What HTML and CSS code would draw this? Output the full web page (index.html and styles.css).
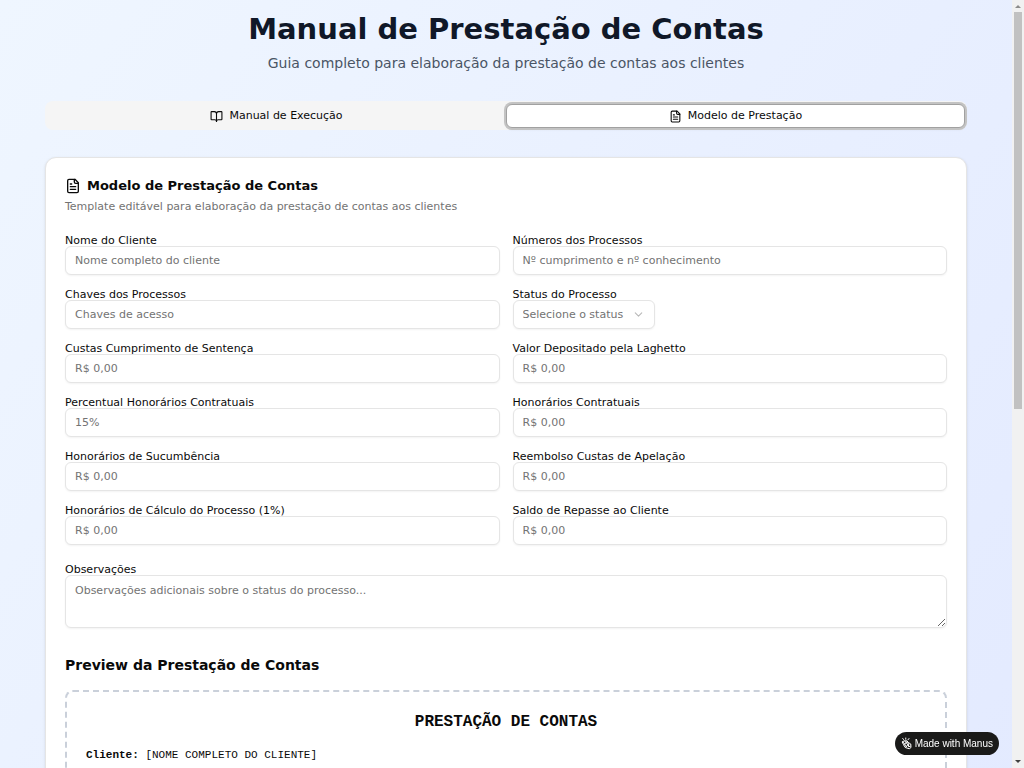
FILE: index.html
```html
<!DOCTYPE html>
<html lang="pt-BR">
<head>
<meta charset="utf-8">
<meta name="viewport" content="width=device-width, initial-scale=1">
<title>Manual de Prestação de Contas</title>
<link rel="stylesheet" href="styles.css">
</head>
<body>
<div class="shell">
  <div class="scroller">
    <div class="page">
      <main class="container">
        <header class="hero">
          <h1 class="hero-title">Manual de Prestação de Contas</h1>
          <p class="hero-subtitle">Guia completo para elaboração da prestação de contas aos clientes</p>
        </header>

        <div class="tabs" role="tablist">
          <button class="tab" type="button" role="tab" aria-selected="false">
            <svg class="icon" viewBox="0 0 24 24" aria-hidden="true"><path d="M12 7v14"/><path d="M3 18a1 1 0 0 1-1-1V4a1 1 0 0 1 1-1h5a4 4 0 0 1 4 4 4 4 0 0 1 4-4h5a1 1 0 0 1 1 1v13a1 1 0 0 1-1 1h-6a3 3 0 0 0-3 3 3 3 0 0 0-3-3z"/></svg>
            Manual de Execução
          </button>
          <button class="tab tab-active" type="button" role="tab" aria-selected="true">
            <svg class="icon" viewBox="0 0 24 24" aria-hidden="true"><path d="M15 2H6a2 2 0 0 0-2 2v16a2 2 0 0 0 2 2h12a2 2 0 0 0 2-2V7Z"/><path d="M14 2v4a2 2 0 0 0 2 2h4"/><path d="M10 9H8"/><path d="M16 13H8"/><path d="M16 17H8"/></svg>
            Modelo de Prestação
          </button>
        </div>

        <section class="card" role="tabpanel">
          <div class="card-header">
            <h2 class="card-title">
              <svg class="icon icon-large" viewBox="0 0 24 24" aria-hidden="true"><path d="M15 2H6a2 2 0 0 0-2 2v16a2 2 0 0 0 2 2h12a2 2 0 0 0 2-2V7Z"/><path d="M14 2v4a2 2 0 0 0 2 2h4"/><path d="M10 9H8"/><path d="M16 13H8"/><path d="M16 17H8"/></svg>
              Modelo de Prestação de Contas
            </h2>
            <p class="card-description">Template editável para elaboração da prestação de contas aos clientes</p>
          </div>

          <form class="form">
            <div class="fields">
              <div class="field">
                <label class="label" for="cliente">Nome do Cliente</label>
                <input class="control" id="cliente" type="text" placeholder="Nome completo do cliente">
              </div>
              <div class="field">
                <label class="label" for="numeros">Números dos Processos</label>
                <input class="control" id="numeros" type="text" placeholder="Nº cumprimento e nº conhecimento">
              </div>
              <div class="field">
                <label class="label" for="chaves">Chaves dos Processos</label>
                <input class="control" id="chaves" type="text" placeholder="Chaves de acesso">
              </div>
              <div class="field">
                <label class="label" for="status">Status do Processo</label>
                <div class="select-wrap">
                  <select class="control select" id="status">
                    <option>Selecione o status</option>
                  </select>
                  <svg class="icon chevron" viewBox="0 0 24 24" aria-hidden="true"><path d="m6 9 6 6 6-6"/></svg>
                </div>
              </div>
              <div class="field">
                <label class="label" for="custas">Custas Cumprimento de Sentença</label>
                <input class="control" id="custas" type="text" placeholder="R$ 0,00">
              </div>
              <div class="field">
                <label class="label" for="valor">Valor Depositado pela Laghetto</label>
                <input class="control" id="valor" type="text" placeholder="R$ 0,00">
              </div>
              <div class="field">
                <label class="label" for="percentual">Percentual Honorários Contratuais</label>
                <input class="control" id="percentual" type="text" placeholder="15%">
              </div>
              <div class="field">
                <label class="label" for="honorarios">Honorários Contratuais</label>
                <input class="control" id="honorarios" type="text" placeholder="R$ 0,00">
              </div>
              <div class="field">
                <label class="label" for="sucumbencia">Honorários de Sucumbência</label>
                <input class="control" id="sucumbencia" type="text" placeholder="R$ 0,00">
              </div>
              <div class="field">
                <label class="label" for="reembolso">Reembolso Custas de Apelação</label>
                <input class="control" id="reembolso" type="text" placeholder="R$ 0,00">
              </div>
              <div class="field">
                <label class="label" for="calculo">Honorários de Cálculo do Processo (1%)</label>
                <input class="control" id="calculo" type="text" placeholder="R$ 0,00">
              </div>
              <div class="field">
                <label class="label" for="saldo">Saldo de Repasse ao Cliente</label>
                <input class="control" id="saldo" type="text" placeholder="R$ 0,00">
              </div>
            </div>
            <div class="field">
              <label class="label" for="observacoes">Observações</label>
              <textarea class="control textarea" id="observacoes" placeholder="Observações adicionais sobre o status do processo..."></textarea>
            </div>
          </form>

          <h3 class="preview-heading">Preview da Prestação de Contas</h3>
          <article class="preview">
            <h4 class="preview-title">PRESTAÇÃO DE CONTAS</h4>
            <p class="preview-line"><strong>Cliente:</strong> [NOME COMPLETO DO CLIENTE]</p>
          </article>
        </section>
      </main>
    </div>
  </div>

  <div class="scrollbar" aria-hidden="true">
    <svg class="scroll-arrow" viewBox="0 0 12 12"><path d="M3 8h6L6 5z" fill="#8b8b8b"/></svg>
    <div class="scroll-track"><div class="scroll-thumb"></div></div>
    <svg class="scroll-arrow" viewBox="0 0 12 12"><path d="M3 4h6L6 7z" fill="#404040"/></svg>
  </div>
</div>

<a class="badge" href="#">
  <svg class="badge-icon" viewBox="0 0 24 24" aria-hidden="true">
    <path d="M3 8.500 7 6.500 12 7 15.500 10.500 19.500 13 20 20 16.500 22.500 8.500 20 5.500 15z"/>
    <path d="M3.500 8.500 11 18M7.500 7 14 15M12 7l3.500 7M6 14l5-4M15 14.500v4l3.500-1M9 19l4-3"/>
    <path d="M5 4 3.500 2M9.500 3.500V1M14 4.500 16 2"/>
  </svg>
  Made with Manus
</a>
</body>
</html>
```

FILE: styles.css
```css
* {
  box-sizing: border-box;
  margin: 0;
}

body {
  font-family: "DejaVu Sans", sans-serif;
  font-size: 11px;
  line-height: 16px;
  color: #0a0a0a;
}

.shell {
  display: grid;
  grid-template-columns: minmax(0, 1fr) 12px;
  height: 100vh;
}

.scroller {
  overflow-y: auto;
  scrollbar-width: none;
}

.page {
  min-height: 186vh;
  padding: 13px;
  display: flex;
  background: linear-gradient(to bottom right, #eff6ff, #e0e7ff);
}

.container {
  flex: 1;
  max-width: 922px;
  margin: 0 auto;
  display: flex;
  flex-direction: column;
}

.hero {
  display: flex;
  flex-direction: column;
  gap: 7px;
  margin-bottom: 26px;
  text-align: center;
}

.hero-title {
  font-size: 29px;
  line-height: 32px;
  color: #101828;
}

.hero-subtitle {
  font-size: 14px;
  line-height: 23px;
  color: #4a5565;
}

.tabs {
  display: grid;
  grid-template-columns: 1fr 1fr;
  margin-bottom: 27px;
  padding: 3px 2px 2px;
  height: 29px;
  border-radius: 8px;
  background: #f5f5f5;
}

.tab {
  display: flex;
  align-items: center;
  justify-content: center;
  gap: 6px;
  border: 1px solid transparent;
  border-radius: 6px;
  background: transparent;
  font: inherit;
  color: #0a0a0a;
}

.tab-active {
  border-color: #a1a1a1;
  background: #fff;
  box-shadow: 0 0 0 2px #c3c3c3, 0 1px 3px #00000022;
}

.icon {
  width: 13px;
  height: 13px;
  flex: none;
  fill: none;
  stroke: currentColor;
  stroke-width: 2;
  stroke-linecap: round;
  stroke-linejoin: round;
}

.icon-large {
  width: 16px;
  height: 16px;
}

.card {
  flex: 1;
  display: flex;
  flex-direction: column;
  padding: 19px;
  border: 1px solid #e5e5e5;
  border-radius: 11px;
  background: #fff;
  box-shadow: 0 1px 3px #0000001a;
}

.card-header {
  display: flex;
  flex-direction: column;
  gap: 5px;
  margin-bottom: 21px;
}

.card-title {
  display: flex;
  align-items: center;
  gap: 6px;
  font-size: 13px;
  line-height: 17px;
}

.card-description {
  color: #737373;
}

.form {
  display: flex;
  flex-direction: column;
  gap: 20px;
}

.fields {
  display: grid;
  grid-template-columns: 1fr 1fr;
  gap: 15px 13px;
}

.field {
  display: flex;
  flex-direction: column;
}

.label {
  line-height: 10px;
}

.control {
  width: 100%;
  height: 29px;
  padding: 3px 9px;
  border: 1px solid #e5e5e5;
  border-radius: 6px;
  background: #fff;
  box-shadow: 0 1px 2px #0000000d;
  font: inherit;
  color: #0a0a0a;
}

.control::placeholder {
  color: #737373;
}

.select-wrap {
  position: relative;
  align-self: flex-start;
}

.select {
  display: block;
  padding-right: 30px;
  appearance: none;
  color: #737373;
}

.chevron {
  position: absolute;
  top: 8px;
  right: 10px;
  color: #b9b9b9;
  pointer-events: none;
}

.textarea {
  display: block;
  height: 53px;
  padding: 7px 9px;
  resize: vertical;
}

.preview-heading {
  margin: 26px 0 13px;
  font-size: 14px;
  line-height: 23px;
}

.preview {
  flex: 1;
  padding: 19px;
  border: 2px dashed #cad0da;
  border-radius: 8px;
  font-family: "Liberation Mono", monospace;
}

.preview-title {
  margin-bottom: 13px;
  font-size: 16px;
  line-height: 22px;
  text-align: center;
}

.preview-line {
  line-height: 18px;
}

.scrollbar {
  display: flex;
  flex-direction: column;
  background: #f1f1f1;
}

.scroll-arrow {
  width: 12px;
  height: 12px;
  flex: none;
}

.scroll-track {
  flex: 1;
  padding: 0 2px;
}

.scroll-thumb {
  height: 53.3%;
  background: #c1c1c1;
}

.badge {
  position: fixed;
  right: 25px;
  bottom: 13px;
  display: flex;
  align-items: center;
  gap: 2px;
  height: 23px;
  padding: 0 6px;
  border-radius: 12px;
  background: #1a1a19;
  font: 10px/16px "Liberation Sans", sans-serif;
  color: #fff;
  text-decoration: none;
}

.badge-icon {
  width: 12px;
  height: 13px;
  fill: none;
  stroke: currentColor;
  stroke-width: 2;
  stroke-linecap: round;
  stroke-linejoin: round;
}
```
